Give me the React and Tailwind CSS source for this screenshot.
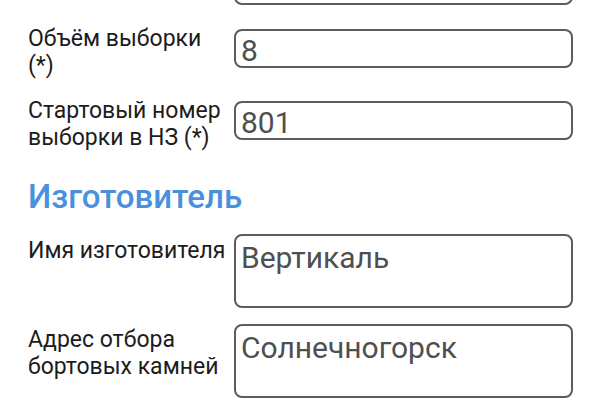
import React from "react";

const font = { fontFamily: "Roboto, 'Noto Sans', sans-serif" };

function Field({ value, tall, className = "" }) {
  return (
    <div
      className={`w-[339px] flex-none rounded-[8px] border-2 border-[#5c5c5c] bg-white px-[5px] text-[30px] leading-[35px] text-[#4f4f4f] ${
        tall ? "h-[74px] pt-[4px]" : "h-[39px] pt-[2px]"
      } ${className}`}
    >
      {value}
    </div>
  );
}

function Row({ label, value, tall, rowClass = "", labelClass = "", fieldClass = "" }) {
  return (
    <div className={`flex items-start ${rowClass}`}>
      <div className={`w-[206px] flex-none pr-[4px] whitespace-nowrap text-[23px] leading-[27px] text-[#1c1c1c] ${labelClass}`}>
        {label}
      </div>
      <Field value={value} tall={tall} className={fieldClass} />
    </div>
  );
}

export default function App() {
  return (
    <div className="w-[600px] h-[400px] overflow-hidden bg-white" style={font}>
      <div className="-mt-[34px] pl-[28px] pr-[27px] flex flex-col">
        <Row label="" value="" />
        <Row
          rowClass="mt-[20px]"
          label={
            <>
              Объём выборки
              <br />
              (*)
            </>
          }
          value="8"
          fieldClass="mt-[4px]"
        />
        <Row
          rowClass="mt-[18px]"
          label={
            <>
              Стартовый номер
              <br />
              выборки в НЗ (*)
            </>
          }
          value="801"
          fieldClass="mt-[4px]"
        />
        <h2 className="mt-[28px] text-[33px] leading-[36px] font-medium text-[#4a90dc]">
          Изготовитель
        </h2>
        <Row
          rowClass="mt-[19px]"
          label="Имя изготовителя"
          labelClass="mt-[3px]"
          value="Вертикаль"
          tall
        />
        <Row
          rowClass="mt-[16px]"
          label={
            <>
              Адрес отбора
              <br />
              бортовых камней
            </>
          }
          labelClass="mt-[2px]"
          value="Солнечногорск"
          tall
        />
      </div>
    </div>
  );
}
